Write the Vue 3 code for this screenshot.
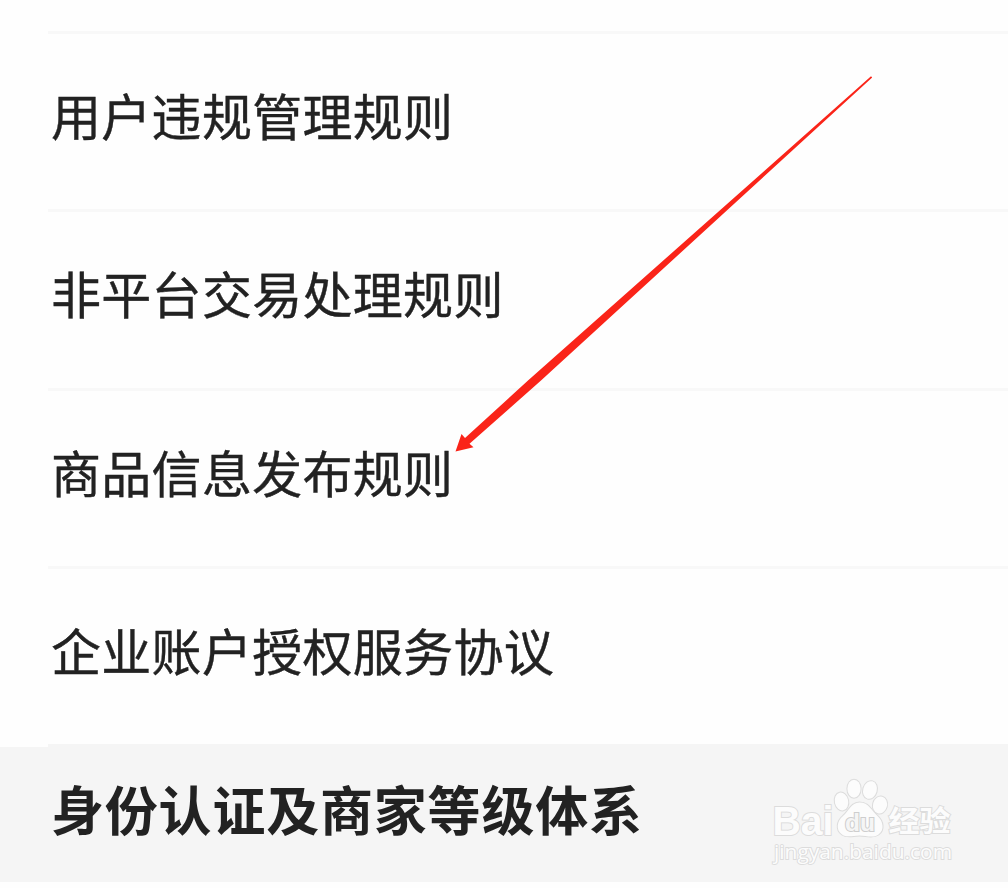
<template>
  <div class="page">
    <ul class="rules">
      <li v-for="rule in rules" :key="rule" class="rule">{{ rule }}</li>
    </ul>
    <h2 class="section">身份认证及商家等级体系</h2>

    <svg class="arrow" viewBox="0 0 1008 888" aria-hidden="true">
      <path d="M455.5 451.5 L461.5 434 L465 438 L528 380.500 L871 76.300 L872.2 77.500 L541 380.5 L469.5 443.800 L473.500 447.3 Z" />
    </svg>

    <svg class="watermark" viewBox="0 0 210 118">
      <g class="mark">
        <text class="brand" x="12.500" y="65" textLength="61" lengthAdjust="spacingAndGlyphs">Bai</text>
        <ellipse cx="81.5" cy="31.5" rx="6.7" ry="9" transform="rotate(-12 81.5 31.5)" />
        <ellipse cx="94" cy="18.7" rx="6.6" ry="9" />
        <ellipse cx="110" cy="20" rx="6.8" ry="9" transform="rotate(16 110 20)" />
        <ellipse cx="120" cy="35" rx="7" ry="8.6" transform="rotate(15 120 35)" />
        <path d="M99.5 32.5 C91 32.5 89 41 83 46 C77 51 75.5 60 82 64.5 C87 68 93 65.5 99.5 65.5 C106 65.5 113 68.5 118.5 64.5 C125 60 123 51 117.5 46 C111 40.5 109 32.5 99.5 32.5 Z" />
        <text class="du" x="85" y="60.5" textLength="30" lengthAdjust="spacingAndGlyphs">du</text>
        <text class="name" x="128.500" y="61.500" textLength="62" lengthAdjust="spacingAndGlyphs">经验</text>
        <text class="site" x="14" y="89" textLength="178" lengthAdjust="spacingAndGlyphs">jingyan.baidu.com</text>
      </g>
    </svg>
  </div>
</template>

<script setup>
const rules = [
  '用户违规管理规则',
  '非平台交易处理规则',
  '商品信息发布规则',
  '企业账户授权服务协议'
];
</script>

<style>
body { background: #fefefe; }
</style>

<style scoped>
.page { position: relative; width: 1008px; height: 888px; box-sizing: border-box; padding-top: 31px; overflow: hidden; background: #fefefe; color: #222; font-family: "Noto Sans CJK SC", sans-serif; }
.rules { margin: 0; padding: 0 0 0 48px; list-style: none; }
.rule { height: 178.3px; box-sizing: border-box; border-top: 3px solid #f8f8f8; padding-left: 3px; font-size: 50px; line-height: 161px; letter-spacing: 0.3px; white-space: nowrap; -webkit-text-stroke: 0.4px #222; }
.rule:last-child { border-bottom: 3px solid #f5f5f5; height: 181px; }
.section { height: 135px; margin: 0; box-sizing: border-box; padding-left: 51px; background: #f5f5f5; font-size: 53px; font-weight: 700; line-height: 122px; letter-spacing: 0.8px; white-space: nowrap; }
.arrow { position: absolute; left: 0; top: 0; width: 1008px; height: 888px; pointer-events: none; }
.arrow path { fill: #fa2419; }
.watermark { position: absolute; left: 760px; top: 770px; width: 210px; height: 118px; }
.mark { fill: #fcfcfc; stroke: #dcdcdc; stroke-width: 2px; paint-order: stroke; font-family: "Open Sans", "Noto Sans CJK SC", sans-serif; }
.brand { font-family: "Liberation Sans", sans-serif; font-size: 41px; font-weight: 700; }
.du { font-family: "Liberation Sans", sans-serif; font-size: 23px; font-weight: 700; fill: #f5f5f5; stroke: #cecece; }
.name { font-family: "Noto Sans CJK SC", sans-serif; font-size: 29px; font-weight: 700; }
.site { font-size: 19.5px; stroke-width: 1.8px; }
</style>
